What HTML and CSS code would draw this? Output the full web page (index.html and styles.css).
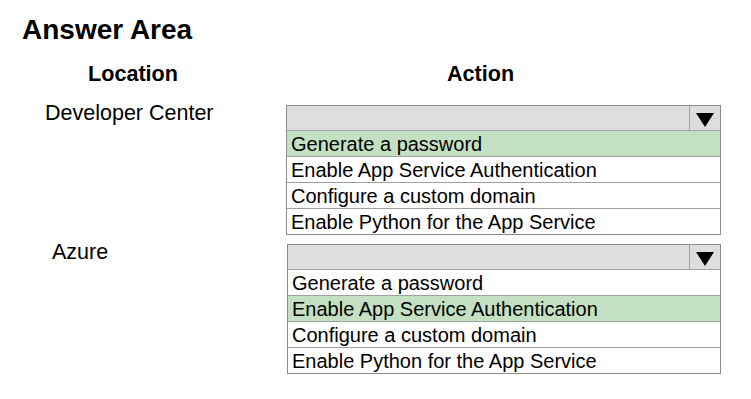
FILE: index.html
```html
<!DOCTYPE html>
<html lang="en">
<head>
    <meta charset="UTF-8">
    <title>Answer Area</title>
    <link rel="stylesheet" href="styles.css">
</head>
<body>
    <div class="answer-area">
        <h1 class="title">Answer Area</h1>
        <div class="heads">
            <div class="head head-location">Location</div>
            <div class="head head-action">Action</div>
        </div>
        <div class="row">
            <div class="location location-dev">Developer Center</div>
            <div class="dropdown">
                <div class="dropdown-head">
                    <div class="dropdown-value"></div>
                    <div class="dropdown-arrow"><span class="triangle"></span></div>
                </div>
                <div class="option selected">Generate a password</div>
                <div class="option">Enable App Service Authentication</div>
                <div class="option">Configure a custom domain</div>
                <div class="option">Enable Python for the App Service</div>
            </div>
        </div>
        <div class="row">
            <div class="location location-azure">Azure</div>
            <div class="dropdown dropdown-azure">
                <div class="dropdown-head">
                    <div class="dropdown-value"></div>
                    <div class="dropdown-arrow"><span class="triangle"></span></div>
                </div>
                <div class="option">Generate a password</div>
                <div class="option selected">Enable App Service Authentication</div>
                <div class="option">Configure a custom domain</div>
                <div class="option">Enable Python for the App Service</div>
            </div>
        </div>
    </div>
</body>
</html>
```

FILE: styles.css
```css
html, body {
    margin: 0;
    padding: 0;
    background: #fff;
    color: #000;
    font-family: 'Liberation Sans', Arial, sans-serif;
}
.answer-area {
    padding-top: 14px;
}
.title {
    margin: 0 0 16px 22px;
    font-size: 28px;
    line-height: 32px;
    font-weight: 700;
}
.heads {
    display: flex;
    font-size: 21.6px;
    line-height: 24px;
    font-weight: 700;
    margin-bottom: 15px;
}
.head-location {
    width: 286px;
    padding-left: 88px;
    box-sizing: border-box;
}
.head-action {
    padding-left: 161px;
}
.row {
    display: flex;
    align-items: flex-start;
    margin-bottom: 5px;
}
.location {
    width: 286px;
    box-sizing: border-box;
    font-size: 21.5px;
    line-height: 24px;
}
.location-dev {
    padding-left: 45px;
}
.location-azure {
    padding-left: 52px;
}
.dropdown {
    margin-top: 4px;
    width: 435px;
    border: 1px solid #8c8c8c;
    box-sizing: border-box;
}
.dropdown-azure {
    margin-left: 1px;
    width: 434px;
}
.dropdown-head {
    display: flex;
    height: 24px;
    background: #dedede;
}
.dropdown-value {
    flex: 1;
}
.dropdown-arrow {
    width: 30px;
    border-left: 1px solid #a0a0a0;
    display: flex;
    justify-content: center;
    align-items: center;
}
.triangle {
    width: 0;
    height: 0;
    border-left: 9px solid transparent;
    border-right: 9px solid transparent;
    border-top: 14px solid #000;
    margin-top: 3px;
}
.option {
    border-top: 1px solid #a0a0a0;
    padding: 1px 0 0 4px;
    height: 24px;
    font-size: 20px;
    line-height: 24px;
    white-space: nowrap;
}
.option.selected {
    background: #c3e1c2;
}
```
